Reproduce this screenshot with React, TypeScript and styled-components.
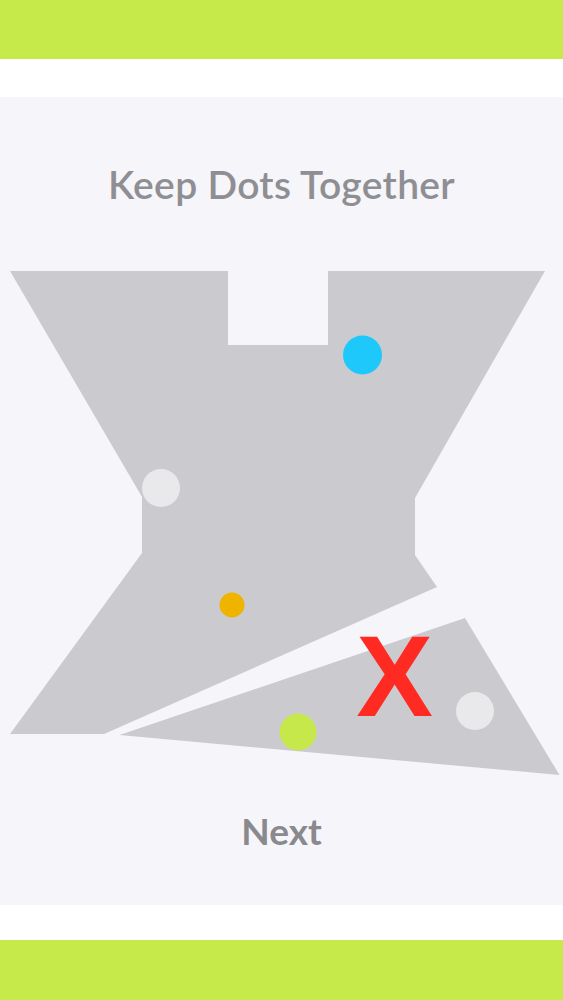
import React from 'react';
import styled, { createGlobalStyle } from 'styled-components';

const GlobalStyle = createGlobalStyle`
  html, body {
    margin: 0;
    padding: 0;
    background: #ffffff;
  }
  body {
    font-family: Lato, "Open Sans", "Noto Sans", sans-serif;
  }
`;

const Screen = styled.div`
  width: 563px;
  height: 1000px;
  display: flex;
  flex-direction: column;
  background: #ffffff;
  overflow: hidden;
`;

const GreenBar = styled.div`
  height: ${(props: { h: number }) => props.h}px;
  background: #c6ea4a;
  flex-shrink: 0;
`;

const Gap = styled.div`
  height: ${(props: { h: number }) => props.h}px;
  background: #ffffff;
  flex-shrink: 0;
`;

const Panel = styled.div`
  height: 808px;
  flex-shrink: 0;
  background: #f5f5fa;
  display: flex;
  flex-direction: column;
  align-items: center;
  padding-top: 63px;
  box-sizing: border-box;
`;

const Title = styled.h1`
  margin: 0;
  font-family: Lato, "Open Sans", sans-serif;
  font-weight: 600;
  font-size: 39px;
  line-height: 48px;
  letter-spacing: 0.3px;
  color: #8e8e93;
`;

const Board = styled.svg`
  display: block;
  margin-top: 42px;
  width: 563px;
  height: 540px;
`;

const NextButton = styled.div`
  margin-top: 18px;
  font-family: Lato, "Open Sans", sans-serif;
  font-weight: 700;
  font-size: 37px;
  line-height: 46px;
  color: #89898e;
  cursor: pointer;
`;

const SHAPE = '#cbcbcf';

const dots = [
  { x: 362.5, y: 355, r: 19.5, c: '#1ec8fb' },
  { x: 161, y: 488, r: 19, c: '#e9e9eb' },
  { x: 232, y: 605, r: 12.5, c: '#efb400' },
  { x: 298, y: 732, r: 18.5, c: '#c6e84a' },
  { x: 475, y: 711, r: 19, c: '#e9e9eb' },
];

const App: React.FC = () => {
  return (
    <>
      <GlobalStyle />
      <Screen>
        <GreenBar h={59} />
        <Gap h={38} />
        <Panel>
          <Title>Keep Dots Together</Title>
          <Board viewBox="0 250 563 540">
            <polygon
              fill={SHAPE}
              points="10,271 228,271 228,345 328,345 328,271 545,271 415,498 415,555 437,587 104,734 10,734 142,553 142,497"
            />
            <polygon fill={SHAPE} points="119.5,735 465,618 559.5,775" />
            {dots.map((d, i) => (
              <circle key={i} cx={d.x} cy={d.y} r={d.r} fill={d.c} />
            ))}
            <text
              x={394.5}
              y={716}
              textAnchor="middle"
              fontFamily='"Liberation Sans", Arial, sans-serif'
              fontWeight={700}
              fontSize={115}
              fill="#ff2b22"
            >
              X
            </text>
          </Board>
          <NextButton>Next</NextButton>
        </Panel>
        <Gap h={35} />
        <GreenBar h={60} />
      </Screen>
    </>
  );
};

export default App;
